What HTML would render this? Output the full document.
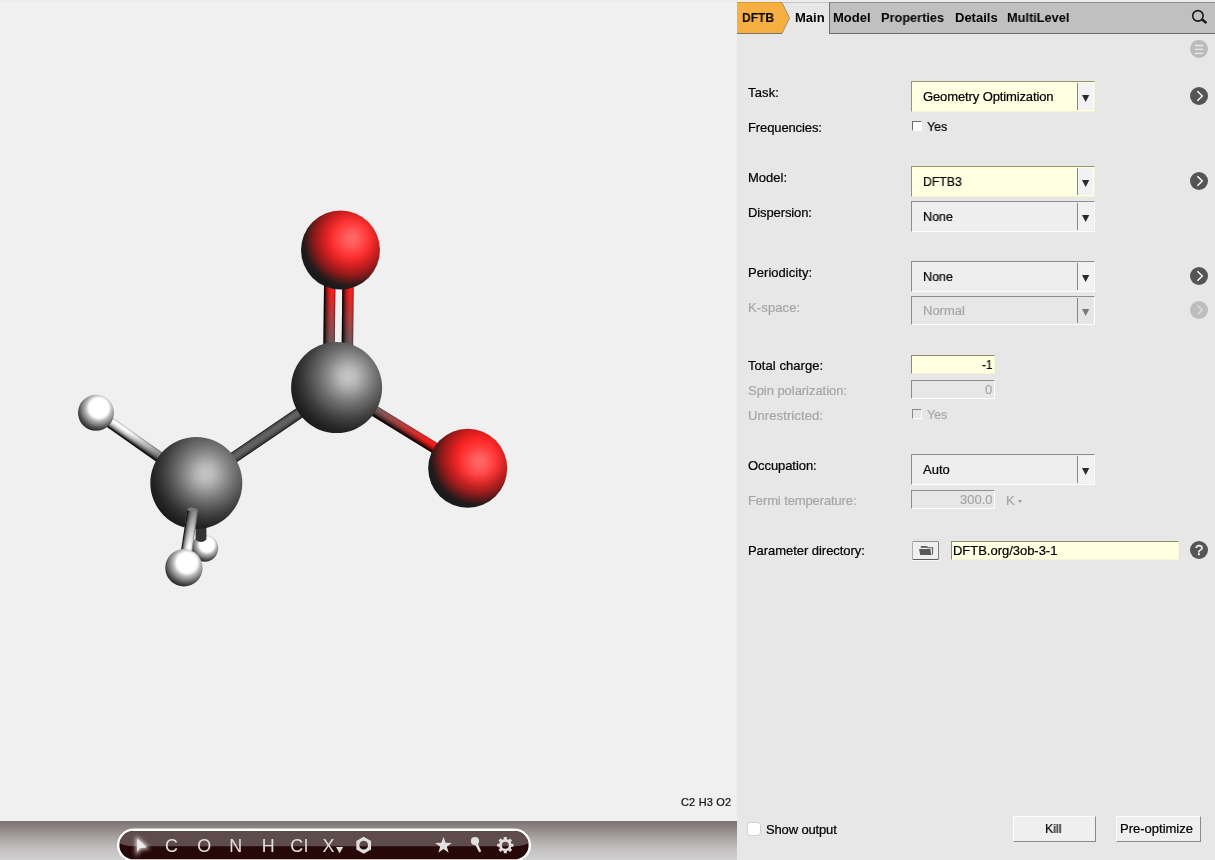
<!DOCTYPE html><html><head><meta charset="utf-8"><title>DFTB</title><style>
html,body{margin:0;padding:0;}
body{width:1215px;height:860px;overflow:hidden;position:relative;background:#f0f0f0;font-family:"Liberation Sans",sans-serif;font-size:13px;color:#000;}
.abs{position:absolute;}
svg{will-change:transform;}
#left{position:absolute;left:0;top:0;width:737px;height:860px;background:#f0f0f0;overflow:hidden;}
#right{position:absolute;left:737px;top:0;width:478px;height:860px;background:#e7e7e7;overflow:hidden;}
.t{position:absolute;white-space:nowrap;line-height:16px;font-size:13px;will-change:transform;-webkit-text-stroke:0.22px currentColor;}
.dis{color:#a6a6a6;}
.b{font-weight:bold;-webkit-text-stroke:0;}
.combo{position:absolute;left:174px;width:184px;box-sizing:border-box;border-top:1px solid #8e8e8e;border-left:1px solid #8e8e8e;border-bottom:1px solid #fdfdfd;border-right:1px solid #fdfdfd;background:#eeeeee;}
.combo.y{background:#ffffe1;border-top-color:#97956f;border-left-color:#97956f;border-bottom-color:#f3f3d6;border-right-color:#f3f3d6;}
.combo.d{background:#e7e7e7;}
.combo .btn{position:absolute;right:1px;top:1px;bottom:1px;width:15px;background:#f2f2f2;border-left:1px solid #868686;}
.combo.d .btn{background:#e5e5e5;}
.combo .arr{position:absolute;left:169px;fill:#2c2c2c;}
.combo.d .arr{fill:#787878;}
.entry{position:absolute;box-sizing:border-box;border-top:1px solid #8e8e8e;border-left:1px solid #8e8e8e;border-bottom:1px solid #fdfdfd;border-right:1px solid #fdfdfd;background:#e7e7e7;}
.entry.y{background:#ffffe1;border-top-color:#8e8c70;border-left-color:#8e8c70;border-bottom-color:#f4f4d8;border-right-color:#f4f4d8;}
.chk{position:absolute;width:10px;height:10px;box-sizing:border-box;background:#fff;border-top:1px solid #6e6e6e;border-left:1px solid #6e6e6e;border-bottom:1px solid #fff;border-right:1px solid #fff;}
.chk.d{background:#e7e7e7;border-top-color:#8a8a8a;border-left-color:#8a8a8a;}
.circ{position:absolute;width:18px;height:18px;border-radius:50%;background:#555555;}
.circ.d{background:#bdbdbd;}
.pbtn{position:absolute;box-sizing:border-box;height:26px;background:#efefef;border-top:1px solid #fdfdfd;border-left:1px solid #fdfdfd;border-bottom:1px solid #8a8a8a;border-right:1px solid #8a8a8a;text-align:center;line-height:16px;font-size:13px;}
</style></head><body>
<div id="left">
<div class="abs" style="left:0;top:0;width:737px;height:2px;background:#ecedee;"></div>
<svg class="abs" style="left:0;top:0;" width="737" height="821" viewBox="0 0 737 821"><defs><radialGradient id="gR" cx="0.635" cy="0.360" r="0.700"><stop offset="0.000" stop-color="#ff1a1a"/><stop offset="0.071" stop-color="#ff1a1a"/><stop offset="0.143" stop-color="#ff1a1a"/><stop offset="0.250" stop-color="#ff1a1a"/><stop offset="0.321" stop-color="#ff1a1a"/><stop offset="0.357" stop-color="#f61a1a"/><stop offset="0.400" stop-color="#eb1a1a"/><stop offset="0.429" stop-color="#e41a1a"/><stop offset="0.536" stop-color="#c01a1a"/><stop offset="0.643" stop-color="#981a1a"/><stop offset="0.714" stop-color="#741a1a"/><stop offset="0.786" stop-color="#4c1a1a"/><stop offset="0.857" stop-color="#241a1a"/><stop offset="0.907" stop-color="#1a1a1a"/><stop offset="0.929" stop-color="#1a1a1a"/><stop offset="0.964" stop-color="#1a1a1a"/><stop offset="1.000" stop-color="#1a1a1a"/></radialGradient><radialGradient id="gC" cx="0.630" cy="0.370" r="0.700"><stop offset="0.000" stop-color="#959595"/><stop offset="0.071" stop-color="#939393"/><stop offset="0.143" stop-color="#8d8d8d"/><stop offset="0.250" stop-color="#7f7f7f"/><stop offset="0.321" stop-color="#767676"/><stop offset="0.357" stop-color="#727272"/><stop offset="0.400" stop-color="#6c6c6c"/><stop offset="0.429" stop-color="#686868"/><stop offset="0.536" stop-color="#595959"/><stop offset="0.643" stop-color="#464646"/><stop offset="0.714" stop-color="#3a3a3a"/><stop offset="0.786" stop-color="#2f2f2f"/><stop offset="0.857" stop-color="#242424"/><stop offset="0.907" stop-color="#202020"/><stop offset="0.929" stop-color="#1e1e1e"/><stop offset="0.964" stop-color="#1b1b1b"/><stop offset="1.000" stop-color="#1a1a1a"/></radialGradient><radialGradient id="gH" cx="0.580" cy="0.365" r="0.700"><stop offset="0.000" stop-color="#ffffff"/><stop offset="0.071" stop-color="#ffffff"/><stop offset="0.143" stop-color="#ffffff"/><stop offset="0.250" stop-color="#ffffff"/><stop offset="0.321" stop-color="#ffffff"/><stop offset="0.357" stop-color="#ffffff"/><stop offset="0.400" stop-color="#fafafa"/><stop offset="0.429" stop-color="#ebebeb"/><stop offset="0.536" stop-color="#b2b2b2"/><stop offset="0.643" stop-color="#8c8c8c"/><stop offset="0.714" stop-color="#6f6f6f"/><stop offset="0.786" stop-color="#525252"/><stop offset="0.857" stop-color="#3c3c3c"/><stop offset="0.907" stop-color="#2d2d2d"/><stop offset="0.929" stop-color="#262626"/><stop offset="0.964" stop-color="#222222"/><stop offset="1.000" stop-color="#1e1e1e"/></radialGradient><linearGradient id="ba1" gradientUnits="userSpaceOnUse" x1="196.30" y1="483.00" x2="336.60" y2="387.60"><stop offset="0.3" stop-color="#626262"/><stop offset="0.7" stop-color="#626262"/></linearGradient><linearGradient id="bs1" gradientUnits="userSpaceOnUse" x1="193.21" y1="478.45" x2="199.39" y2="487.55"><stop offset="0" stop-color="#000" stop-opacity="0.818"/><stop offset="0.1" stop-color="#000" stop-opacity="0.280"/><stop offset="0.2" stop-color="#000" stop-opacity="0.118"/><stop offset="0.3" stop-color="#000" stop-opacity="0.035"/><stop offset="0.4" stop-color="#000" stop-opacity="0.002"/><stop offset="0.5" stop-color="#000" stop-opacity="0.009"/><stop offset="0.6" stop-color="#000" stop-opacity="0.055"/><stop offset="0.7" stop-color="#000" stop-opacity="0.141"/><stop offset="0.8" stop-color="#000" stop-opacity="0.277"/><stop offset="0.88" stop-color="#000" stop-opacity="0.439"/><stop offset="0.94" stop-color="#000" stop-opacity="0.619"/><stop offset="1.0" stop-color="#000" stop-opacity="0.920"/></linearGradient><linearGradient id="ba2" gradientUnits="userSpaceOnUse" x1="96.00" y1="412.80" x2="196.30" y2="483.00"><stop offset="0.3" stop-color="#ffffff"/><stop offset="0.75" stop-color="#626262"/></linearGradient><linearGradient id="bs2" gradientUnits="userSpaceOnUse" x1="99.15" y1="408.29" x2="92.85" y2="417.31"><stop offset="0" stop-color="#000" stop-opacity="0.386"/><stop offset="0.1" stop-color="#000" stop-opacity="0.040"/><stop offset="0.2" stop-color="#000" stop-opacity="0.000"/><stop offset="0.3" stop-color="#000" stop-opacity="0.024"/><stop offset="0.4" stop-color="#000" stop-opacity="0.088"/><stop offset="0.5" stop-color="#000" stop-opacity="0.186"/><stop offset="0.6" stop-color="#000" stop-opacity="0.314"/><stop offset="0.7" stop-color="#000" stop-opacity="0.475"/><stop offset="0.8" stop-color="#000" stop-opacity="0.677"/><stop offset="0.88" stop-color="#000" stop-opacity="0.882"/><stop offset="0.94" stop-color="#000" stop-opacity="0.920"/><stop offset="1.0" stop-color="#000" stop-opacity="0.920"/></linearGradient><linearGradient id="ba3" gradientUnits="userSpaceOnUse" x1="330.10" y1="250.00" x2="328.60" y2="387.60"><stop offset="0.28" stop-color="#ff1c1c"/><stop offset="0.72" stop-color="#626262"/></linearGradient><linearGradient id="bs3" gradientUnits="userSpaceOnUse" x1="335.80" y1="250.06" x2="324.40" y2="249.94"><stop offset="0" stop-color="#000" stop-opacity="0.509"/><stop offset="0.1" stop-color="#000" stop-opacity="0.092"/><stop offset="0.2" stop-color="#000" stop-opacity="0.012"/><stop offset="0.3" stop-color="#000" stop-opacity="0.002"/><stop offset="0.4" stop-color="#000" stop-opacity="0.037"/><stop offset="0.5" stop-color="#000" stop-opacity="0.109"/><stop offset="0.6" stop-color="#000" stop-opacity="0.214"/><stop offset="0.7" stop-color="#000" stop-opacity="0.355"/><stop offset="0.8" stop-color="#000" stop-opacity="0.542"/><stop offset="0.88" stop-color="#000" stop-opacity="0.739"/><stop offset="0.94" stop-color="#000" stop-opacity="0.920"/><stop offset="1.0" stop-color="#000" stop-opacity="0.920"/></linearGradient><linearGradient id="ba4" gradientUnits="userSpaceOnUse" x1="348.30" y1="250.00" x2="347.00" y2="387.60"><stop offset="0.28" stop-color="#ff1c1c"/><stop offset="0.72" stop-color="#626262"/></linearGradient><linearGradient id="bs4" gradientUnits="userSpaceOnUse" x1="354.00" y1="250.05" x2="342.60" y2="249.95"><stop offset="0" stop-color="#000" stop-opacity="0.508"/><stop offset="0.1" stop-color="#000" stop-opacity="0.092"/><stop offset="0.2" stop-color="#000" stop-opacity="0.012"/><stop offset="0.3" stop-color="#000" stop-opacity="0.002"/><stop offset="0.4" stop-color="#000" stop-opacity="0.038"/><stop offset="0.5" stop-color="#000" stop-opacity="0.109"/><stop offset="0.6" stop-color="#000" stop-opacity="0.214"/><stop offset="0.7" stop-color="#000" stop-opacity="0.356"/><stop offset="0.8" stop-color="#000" stop-opacity="0.542"/><stop offset="0.88" stop-color="#000" stop-opacity="0.739"/><stop offset="0.94" stop-color="#000" stop-opacity="0.920"/><stop offset="1.0" stop-color="#000" stop-opacity="0.920"/></linearGradient><linearGradient id="ba5" gradientUnits="userSpaceOnUse" x1="336.60" y1="387.60" x2="467.70" y2="468.30"><stop offset="0.27" stop-color="#6e6262"/><stop offset="0.7" stop-color="#ff1c1c"/></linearGradient><linearGradient id="bs5" gradientUnits="userSpaceOnUse" x1="339.48" y1="382.92" x2="333.72" y2="392.28"><stop offset="0" stop-color="#000" stop-opacity="0.390"/><stop offset="0.1" stop-color="#000" stop-opacity="0.042"/><stop offset="0.2" stop-color="#000" stop-opacity="0.000"/><stop offset="0.3" stop-color="#000" stop-opacity="0.023"/><stop offset="0.4" stop-color="#000" stop-opacity="0.086"/><stop offset="0.5" stop-color="#000" stop-opacity="0.183"/><stop offset="0.6" stop-color="#000" stop-opacity="0.310"/><stop offset="0.7" stop-color="#000" stop-opacity="0.471"/><stop offset="0.8" stop-color="#000" stop-opacity="0.672"/><stop offset="0.88" stop-color="#000" stop-opacity="0.877"/><stop offset="0.94" stop-color="#000" stop-opacity="0.920"/><stop offset="1.0" stop-color="#000" stop-opacity="0.920"/></linearGradient><radialGradient id="sp1" cx="0.640" cy="0.355" r="0.475"><stop offset="0" stop-color="#fff" stop-opacity="0.330"/><stop offset="0.1" stop-color="#fff" stop-opacity="0.315"/><stop offset="0.2" stop-color="#fff" stop-opacity="0.273"/><stop offset="0.3" stop-color="#fff" stop-opacity="0.216"/><stop offset="0.4" stop-color="#fff" stop-opacity="0.156"/><stop offset="0.5" stop-color="#fff" stop-opacity="0.102"/><stop offset="0.6" stop-color="#fff" stop-opacity="0.061"/><stop offset="0.7" stop-color="#fff" stop-opacity="0.033"/><stop offset="0.85" stop-color="#fff" stop-opacity="0.011"/><stop offset="1" stop-color="#fff" stop-opacity="0.000"/></radialGradient><radialGradient id="sp2" cx="0.650" cy="0.420" r="0.475"><stop offset="0" stop-color="#fff" stop-opacity="0.330"/><stop offset="0.1" stop-color="#fff" stop-opacity="0.315"/><stop offset="0.2" stop-color="#fff" stop-opacity="0.273"/><stop offset="0.3" stop-color="#fff" stop-opacity="0.216"/><stop offset="0.4" stop-color="#fff" stop-opacity="0.156"/><stop offset="0.5" stop-color="#fff" stop-opacity="0.102"/><stop offset="0.6" stop-color="#fff" stop-opacity="0.061"/><stop offset="0.7" stop-color="#fff" stop-opacity="0.033"/><stop offset="0.85" stop-color="#fff" stop-opacity="0.011"/><stop offset="1" stop-color="#fff" stop-opacity="0.000"/></radialGradient><radialGradient id="sp3" cx="0.630" cy="0.380" r="0.475"><stop offset="0" stop-color="#fff" stop-opacity="0.440"/><stop offset="0.1" stop-color="#fff" stop-opacity="0.420"/><stop offset="0.2" stop-color="#fff" stop-opacity="0.365"/><stop offset="0.3" stop-color="#fff" stop-opacity="0.288"/><stop offset="0.4" stop-color="#fff" stop-opacity="0.208"/><stop offset="0.5" stop-color="#fff" stop-opacity="0.136"/><stop offset="0.6" stop-color="#fff" stop-opacity="0.081"/><stop offset="0.7" stop-color="#fff" stop-opacity="0.044"/><stop offset="0.85" stop-color="#fff" stop-opacity="0.015"/><stop offset="1" stop-color="#fff" stop-opacity="0.000"/></radialGradient><radialGradient id="sp4" cx="0.590" cy="0.415" r="0.475"><stop offset="0" stop-color="#fff" stop-opacity="0.440"/><stop offset="0.1" stop-color="#fff" stop-opacity="0.420"/><stop offset="0.2" stop-color="#fff" stop-opacity="0.365"/><stop offset="0.3" stop-color="#fff" stop-opacity="0.288"/><stop offset="0.4" stop-color="#fff" stop-opacity="0.208"/><stop offset="0.5" stop-color="#fff" stop-opacity="0.136"/><stop offset="0.6" stop-color="#fff" stop-opacity="0.081"/><stop offset="0.7" stop-color="#fff" stop-opacity="0.044"/><stop offset="0.85" stop-color="#fff" stop-opacity="0.015"/><stop offset="1" stop-color="#fff" stop-opacity="0.000"/></radialGradient><linearGradient id="ba6" gradientUnits="userSpaceOnUse" x1="192.60" y1="511.00" x2="183.90" y2="567.80"><stop offset="0.0" stop-color="#8a8a8a"/><stop offset="0.6" stop-color="#ffffff"/></linearGradient><linearGradient id="bs6" gradientUnits="userSpaceOnUse" x1="198.04" y1="511.83" x2="187.16" y2="510.17"><stop offset="0" stop-color="#000" stop-opacity="0.565"/><stop offset="0.1" stop-color="#000" stop-opacity="0.121"/><stop offset="0.2" stop-color="#000" stop-opacity="0.024"/><stop offset="0.3" stop-color="#000" stop-opacity="0.000"/><stop offset="0.4" stop-color="#000" stop-opacity="0.022"/><stop offset="0.5" stop-color="#000" stop-opacity="0.082"/><stop offset="0.6" stop-color="#000" stop-opacity="0.176"/><stop offset="0.7" stop-color="#000" stop-opacity="0.308"/><stop offset="0.8" stop-color="#000" stop-opacity="0.487"/><stop offset="0.88" stop-color="#000" stop-opacity="0.679"/><stop offset="0.94" stop-color="#000" stop-opacity="0.877"/><stop offset="1.0" stop-color="#000" stop-opacity="0.920"/></linearGradient></defs><circle cx="204.8" cy="548.3" r="13.4" fill="url(#gH)"/>
<path d="M195.6 520L206.4 520L206.4 539.5Q201 544.5 195.6 539.5Z" fill="#333"/>
<path d="M193.21 478.45L333.51 383.05L339.69 392.15L199.39 487.55Z" fill="url(#ba1)"/><path d="M193.21 478.45L333.51 383.05L339.69 392.15L199.39 487.55Z" fill="url(#bs1)"/>
<path d="M99.15 408.29L199.45 478.49L193.15 487.51L92.85 417.31Z" fill="url(#ba2)"/><path d="M99.15 408.29L199.45 478.49L193.15 487.51L92.85 417.31Z" fill="url(#bs2)"/>
<path d="M335.80 250.06L334.30 387.66L322.90 387.54L324.40 249.94Z" fill="url(#ba3)"/><path d="M335.80 250.06L334.30 387.66L322.90 387.54L324.40 249.94Z" fill="url(#bs3)"/>
<path d="M354.00 250.05L352.70 387.65L341.30 387.55L342.60 249.95Z" fill="url(#ba4)"/><path d="M354.00 250.05L352.70 387.65L341.30 387.55L342.60 249.95Z" fill="url(#bs4)"/>
<path d="M339.48 382.92L470.58 463.62L464.82 472.98L333.72 392.28Z" fill="url(#ba5)"/><path d="M339.48 382.92L470.58 463.62L464.82 472.98L333.72 392.28Z" fill="url(#bs5)"/>
<circle cx="96" cy="412.8" r="18" fill="url(#gH)"/>
<circle cx="340.5" cy="250" r="39.5" fill="url(#gR)"/>
<circle cx="340.5" cy="250" r="39.5" fill="url(#sp1)"/>
<circle cx="467.7" cy="468.3" r="39.5" fill="url(#gR)"/>
<circle cx="467.7" cy="468.3" r="39.5" fill="url(#sp2)"/>
<circle cx="336.6" cy="387.6" r="45.5" fill="url(#gC)"/>
<circle cx="336.6" cy="387.6" r="45.5" fill="url(#sp3)"/>
<circle cx="196.3" cy="483" r="46" fill="url(#gC)"/>
<circle cx="196.3" cy="483" r="46" fill="url(#sp4)"/>
<ellipse cx="192.6" cy="511.2" rx="5.5" ry="3.6" transform="rotate(9 192.6 511.2)" fill="#7c7c7c"/>
<path d="M198.04 511.83L189.34 568.63L178.46 566.97L187.16 510.17Z" fill="url(#ba6)"/><path d="M198.04 511.83L189.34 568.63L178.46 566.97L187.16 510.17Z" fill="url(#bs6)"/>
<circle cx="183.9" cy="567.8" r="18.7" fill="url(#gH)"/></svg>
<div id="formula" class="t " style="left:680.90px;top:794.00px;font-size:11px;letter-spacing:0.180px;color:#111;">C2 H3 O2</div>
<div class="abs" style="left:0;top:821px;width:737px;height:39px;background:linear-gradient(#7e7171 0%,#968d8d 25%,#b1acac 50%,#c5c3c3 75%,#d1d0d0 100%);"></div>
<svg class="abs" style="left:110px;top:824px;will-change:transform;" width="430" height="36" viewBox="0 0 430 36"><defs><filter id="glow" x="-100%" y="-100%" width="300%" height="300%"><feGaussianBlur stdDeviation="2"/></filter><clipPath id="pillclip"><rect x="9.4" y="7" width="409.2" height="28.3" rx="14.1" ry="14.1"/></clipPath></defs><rect x="8.2" y="5.800000000000023" width="411.6" height="30.700000000000003" rx="15.35" ry="15.35" fill="#270808" stroke="#ffffff" stroke-width="2.4"/><g clip-path="url(#pillclip)"><path d="M7.40 4.50L420.60 4.50L420.60 17.20Q416.60 22.20 403.60 22.20L24.40 22.20Q11.40 22.20 7.40 17.20Z" fill="#5e4c4c"/></g><path d="M27.20 14.60L36.90 23.60L29.90 23.90L27.20 28.30Z" fill="#fff" stroke="#fff" stroke-width="2.5" filter="url(#glow)" opacity="0.85"/><path d="M27.20 14.60L36.90 23.60L29.90 23.90L27.20 28.30Z" fill="#f0eded"/><g font-family="Liberation Sans, sans-serif" font-size="17.9" fill="#e2dede"><text x="55.00" y="28.10" >C</text><text x="87.30" y="28.10" >O</text><text x="119.30" y="28.10" >N</text><text x="151.80" y="28.10" >H</text><text x="180.30" y="28.10" letter-spacing="0.9">Cl</text><text x="212.40" y="28.10" >X</text></g><path d="M226.00 22.90L233.20 22.90L229.60 29.20Z" fill="#e2dede"/><path d="M253.70 12.70L261.06 16.95L261.06 25.45L253.70 29.70L246.34 25.45L246.34 16.95ZM249.30 21.20A4.4 4.4 0 1 0 258.10 21.20A4.4 4.4 0 1 0 249.30 21.20Z" fill="#e2dede" fill-rule="evenodd"/><path d="M333.50 12.80L335.56 18.77L341.87 18.88L336.83 22.68L338.67 28.72L333.50 25.10L328.33 28.72L330.17 22.68L325.13 18.88L331.44 18.77Z" fill="#e2dede"/><circle cx="365" cy="17.10" r="4.1" fill="#e2dede"/><path d="M366.20 19.60L369.70 26.80" stroke="#e2dede" stroke-width="2.6" stroke-linecap="round"/><g transform="translate(395.30,21.20)"><circle cx="0" cy="0" r="4.85" fill="none" stroke="#e2dede" stroke-width="2.7"/><rect x="-1.55" y="-8.1" width="3.1" height="2.6" rx="0.5" fill="#e2dede" transform="rotate(0)"/><rect x="-1.55" y="-8.1" width="3.1" height="2.6" rx="0.5" fill="#e2dede" transform="rotate(45)"/><rect x="-1.55" y="-8.1" width="3.1" height="2.6" rx="0.5" fill="#e2dede" transform="rotate(90)"/><rect x="-1.55" y="-8.1" width="3.1" height="2.6" rx="0.5" fill="#e2dede" transform="rotate(135)"/><rect x="-1.55" y="-8.1" width="3.1" height="2.6" rx="0.5" fill="#e2dede" transform="rotate(180)"/><rect x="-1.55" y="-8.1" width="3.1" height="2.6" rx="0.5" fill="#e2dede" transform="rotate(225)"/><rect x="-1.55" y="-8.1" width="3.1" height="2.6" rx="0.5" fill="#e2dede" transform="rotate(270)"/><rect x="-1.55" y="-8.1" width="3.1" height="2.6" rx="0.5" fill="#e2dede" transform="rotate(315)"/></g></svg>
</div>
<div id="right">
<div class="abs" style="left:0;top:0;width:478px;height:2px;background:#ebeced;"></div>
<div class="abs" style="left:92px;top:2px;width:386px;height:32px;box-sizing:border-box;background:#c0c0c0;border-left:1px solid #6e6e6e;border-top:1px solid #8c8c8c;border-bottom:1px solid #6e6e6e;"></div>
<svg class="abs" style="left:0;top:2px;" width="56" height="32" viewBox="0 0 56 32"><path d="M0 0.5H45L52.5 16L45 31.5H0Z" fill="#f5b041"/><path d="M0 0.5H45" stroke="#d89a2c" stroke-width="1" fill="none"/><path d="M45 0.5L52.5 16L45 31.5" stroke="#8a8270" stroke-width="0.8" fill="none"/><path d="M0 31.5H45" stroke="#7a7468" stroke-width="1" fill="none"/></svg>
<div class="abs" style="left:45px;top:2px;width:47px;height:1px;background:#c6c6c6;"></div>
<div id="tab0" class="t b" style="left:5.20px;top:9.50px;transform:scaleX(0.9259);transform-origin:0 0;">DFTB</div>
<div id="tab1" class="t b" style="left:57.94px;top:9.50px;transform:scaleX(1.0013);transform-origin:0 0;">Main</div>
<div id="tab2" class="t b" style="left:96.42px;top:9.50px;transform:scaleX(1.0008);transform-origin:0 0;">Model</div>
<div id="tab3" class="t b" style="left:144.00px;top:9.50px;transform:scaleX(0.9806);transform-origin:0 0;">Properties</div>
<div id="tab4" class="t b" style="left:218.00px;top:9.50px;transform:scaleX(0.9980);transform-origin:0 0;">Details</div>
<div id="tab5" class="t b" style="left:269.94px;top:9.50px;transform:scaleX(0.9803);transform-origin:0 0;">MultiLevel</div>
<svg class="abs" style="left:452px;top:8px;" width="20" height="20" viewBox="0 0 20 20"><circle cx="8.9" cy="7.85" r="5.25" fill="none" stroke="#1a1a1a" stroke-width="1.6"/><path d="M12.7 11.3L17.5 14.9" stroke="#1a1a1a" stroke-width="2.5"/></svg>
<svg class="abs" style="left:453px;top:40px;" width="18" height="18" viewBox="0 0 18 18"><circle cx="9" cy="8.95" r="9" fill="#bbbbbb"/><path d="M4.9 5.5H13.1M4.9 9.45H13.1M4.9 13.45H13.1" stroke="#e9e9e9" stroke-width="1.3"/></svg>
<div id="l_task" class="t " style="left:10.60px;top:84.50px;letter-spacing:0.135px;">Task:</div>
<div class="combo y" style="top:81px;height:31px;"><div class="btn"></div><svg class="arr" style="top:12px;" width="10" height="10" viewBox="0 0 10 10"><path d="M1 1H8.3L4.65 8.1Z"/></svg></div>
<div id="v_task" class="t " style="left:185.80px;top:88.50px;letter-spacing:-0.117px;">Geometry Optimization</div>
<svg class="abs" style="left:453px;top:87px;" width="18" height="18" viewBox="0 0 18 18"><circle cx="9" cy="9" r="9" fill="#555555"/><path d="M7.4 4.3L12.3 9L7.4 13.7" fill="none" stroke="#ffffff" stroke-width="1.4"/></svg>
<div id="l_freq" class="t " style="left:10.60px;top:119.50px;letter-spacing:-0.115px;">Frequencies:</div>
<div class="chk" style="left:175px;top:121px;"></div>
<div id="v_freq" class="t " style="left:190.46px;top:118.50px;transform:scaleX(0.9486);transform-origin:0 0;">Yes</div>
<div id="l_model" class="t " style="left:10.60px;top:169.50px;">Model:</div>
<div class="combo y" style="top:166px;height:31px;"><div class="btn"></div><svg class="arr" style="top:12px;" width="10" height="10" viewBox="0 0 10 10"><path d="M1 1H8.3L4.65 8.1Z"/></svg></div>
<div id="v_model" class="t " style="left:186.35px;top:173.50px;transform:scaleX(0.9414);transform-origin:0 0;">DFTB3</div>
<svg class="abs" style="left:453px;top:172px;" width="18" height="18" viewBox="0 0 18 18"><circle cx="9" cy="9" r="9" fill="#555555"/><path d="M7.4 4.3L12.3 9L7.4 13.7" fill="none" stroke="#ffffff" stroke-width="1.4"/></svg>
<div id="l_disp" class="t " style="left:10.60px;top:204.50px;letter-spacing:-0.108px;">Dispersion:</div>
<div class="combo " style="top:201px;height:31px;"><div class="btn"></div><svg class="arr" style="top:12px;" width="10" height="10" viewBox="0 0 10 10"><path d="M1 1H8.3L4.65 8.1Z"/></svg></div>
<div id="v_disp" class="t " style="left:186.35px;top:208.50px;transform:scaleX(0.9662);transform-origin:0 0;">None</div>
<div id="l_per" class="t " style="left:10.60px;top:264.50px;letter-spacing:0.049px;">Periodicity:</div>
<div class="combo " style="top:261px;height:31px;"><div class="btn"></div><svg class="arr" style="top:12px;" width="10" height="10" viewBox="0 0 10 10"><path d="M1 1H8.3L4.65 8.1Z"/></svg></div>
<div id="v_per" class="t " style="left:186.35px;top:268.50px;transform:scaleX(0.9662);transform-origin:0 0;">None</div>
<svg class="abs" style="left:453px;top:267px;" width="18" height="18" viewBox="0 0 18 18"><circle cx="9" cy="9" r="9" fill="#555555"/><path d="M7.4 4.3L12.3 9L7.4 13.7" fill="none" stroke="#ffffff" stroke-width="1.4"/></svg>
<div id="l_ksp" class="t dis" style="left:10.60px;top:299.50px;letter-spacing:0.129px;">K-space:</div>
<div class="combo d" style="top:296px;height:29px;"><div class="btn"></div><svg class="arr" style="top:11.4px;" width="10" height="10" viewBox="0 0 10 10"><path d="M1 1H8.3L4.65 8.1Z"/></svg></div>
<div id="v_ksp" class="t dis" style="left:186.35px;top:302.50px;transform:scaleX(0.9916);transform-origin:0 0;">Normal</div>
<svg class="abs" style="left:453px;top:301px;" width="18" height="18" viewBox="0 0 18 18"><circle cx="9" cy="9" r="9" fill="#bdbdbd"/><path d="M7.4 4.3L12.3 9L7.4 13.7" fill="none" stroke="#dcdcdc" stroke-width="1.4"/></svg>
<div id="l_chg" class="t " style="left:10.60px;top:357.50px;letter-spacing:0.060px;">Total charge:</div>
<div class="entry y" style="left:174px;top:355px;width:84px;height:19px;"></div>
<div id="v_chg" class="t " style="left:244.58px;top:356.50px;transform:scaleX(0.9182);transform-origin:0 0;">-1</div>
<div id="l_spin" class="t dis" style="left:10.60px;top:382.50px;letter-spacing:-0.042px;">Spin polarization:</div>
<div class="entry d" style="left:174px;top:380px;width:84px;height:19px;"></div>
<div id="v_spin" class="t dis" style="left:247.68px;top:381.50px;">0</div>
<div id="l_unr" class="t dis" style="left:10.60px;top:407.50px;letter-spacing:0.105px;">Unrestricted:</div>
<div class="chk d" style="left:175px;top:409px;"></div>
<div id="v_unr" class="t dis" style="left:190.46px;top:406.50px;transform:scaleX(0.9486);transform-origin:0 0;">Yes</div>
<div id="l_occ" class="t " style="left:10.60px;top:457.50px;letter-spacing:-0.072px;">Occupation:</div>
<div class="combo " style="top:454px;height:31px;"><div class="btn"></div><svg class="arr" style="top:12px;" width="10" height="10" viewBox="0 0 10 10"><path d="M1 1H8.3L4.65 8.1Z"/></svg></div>
<div id="v_occ" class="t " style="left:185.80px;top:461.50px;">Auto</div>
<div id="l_fermi" class="t dis" style="left:10.60px;top:492.50px;letter-spacing:-0.116px;">Fermi temperature:</div>
<div class="entry d" style="left:174px;top:490px;width:84px;height:19px;"></div>
<div id="v_fermi" class="t dis" style="left:222.58px;top:491.50px;">300.0</div>
<div id="v_K" class="t dis" style="left:269.30px;top:492.50px;">K</div>
<svg class="abs" style="left:281px;top:499px;" width="6" height="6" viewBox="0 0 6 6"><path d="M0.2 1H4L2.1 4.2Z" fill="#a0a0a0"/></svg>
<div id="l_par" class="t " style="left:10.60px;top:542.50px;letter-spacing:-0.047px;">Parameter directory:</div>
<div class="abs" style="left:174px;top:539px;width:31px;height:1px;background:#dfdfdf;"></div>
<div class="abs" style="left:175px;top:560px;width:27px;height:1px;background:#f5f5f5;"></div>
<div class="abs" style="left:175px;top:541px;width:27px;height:19px;box-sizing:border-box;background:#efefef;border-top:1px solid #929292;border-left:1px solid #b0b0b0;border-bottom:1px solid #5e5e5e;border-right:1px solid #808080;border-radius:1.5px;"></div>
<svg class="abs" style="left:180px;top:544px;" width="18" height="13" viewBox="0 0 18 13"><path d="M4.0 3.6L15.8 3.6L15.5 10.6L4.0 10.6Z" fill="#f4f4f4"/><path d="M3.8 2.0H9.9V3.8H3.8Z" fill="#5a5a5a"/><path d="M9.6 2.6L10.6 3.7L15.7 3.7L15.3 10.7" fill="none" stroke="#5a5a5a" stroke-width="1.1"/><path d="M2.1 5.1L13.5 5.1L14.2 11.0L3.2 11.0Z" fill="#595959"/></svg>
<div class="entry y" style="left:214px;top:541px;width:228px;height:19px;"></div>
<div id="v_par" class="t " style="left:216.10px;top:542.50px;letter-spacing:-0.024px;">DFTB.org/3ob-3-1</div>
<svg class="abs" style="left:453px;top:541px;" width="18" height="18" viewBox="0 0 18 18"><circle cx="9" cy="9" r="9" fill="#555555"/><text x="9" y="14.1" text-anchor="middle" font-family="Liberation Sans, sans-serif" font-size="14.5" fill="#f2f2f2" stroke="#f2f2f2" stroke-width="0.35">?</text></svg>
<div class="abs" style="left:10px;top:822px;width:14px;height:14px;box-sizing:border-box;border-radius:3.5px;background:#fff;border:1px solid #cfcfcf;"></div>
<div id="v_show" class="t " style="left:29.20px;top:821.50px;letter-spacing:-0.150px;">Show output</div>
<div class="pbtn" style="left:276px;top:816px;width:83px;"></div>
<div id="v_kill" class="t " style="left:308.00px;top:820.50px;transform:scaleX(0.9500);transform-origin:0 0;">Kill</div>
<div class="pbtn" style="left:379px;top:816px;width:85px;"></div>
<div id="v_pre" class="t " style="left:383.06px;top:820.50px;">Pre-optimize</div>
</div>
</body></html>
